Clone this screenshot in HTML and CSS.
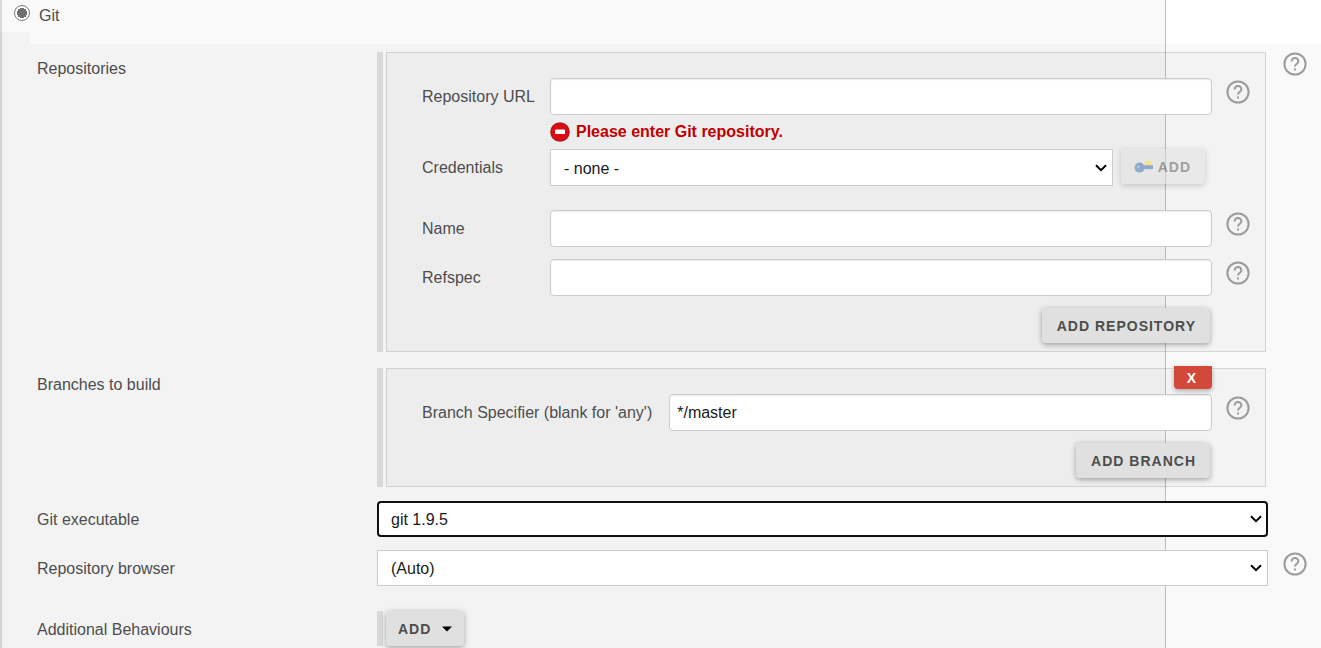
FILE: index.html
```html
<!DOCTYPE html>
<html lang="en">
<head>
<meta charset="utf-8">
<title>Source Code Management</title>
<link rel="stylesheet" href="styles.css">
</head>
<body>
<svg class="sprite" aria-hidden="true">
  <symbol id="help" viewBox="0 0 24 24">
    <circle cx="12" cy="12" r="10.6" fill="none" stroke="currentColor" stroke-width="2"/>
    <path d="M8.6 9.4a3.4 3.4 0 0 1 6.8 0c0 2.3-3.4 2.5-3.4 5.2" fill="none" stroke="currentColor" stroke-width="2"/>
    <path d="M11 16.4h2v2h-2z" fill="currentColor"/>
  </symbol>
</svg>
<form class="page">
  <div class="scm">
    <input class="radio" type="radio" name="scm" id="git" checked>
    <label for="git">Git</label>
  </div>
  <div class="section">
    <div class="gutter"></div>
    <div class="fields">
      <div class="row">
        <div class="row-label">Repositories</div>
        <div class="chunk">
          <div class="handle"></div>
          <div class="box">
            <div class="field">
              <label class="field-label" for="url">Repository URL</label>
              <input class="text" type="text" id="url">
              <a class="help" href="#" aria-label="Help for Repository URL"><svg><use href="#help"/></svg></a>
            </div>
            <div class="error">
              <svg class="error-icon" viewBox="0 0 20 20" aria-hidden="true">
                <circle cx="10" cy="10" r="9.8" fill="#b3141a"/>
                <circle cx="10" cy="10" r="8.6" fill="#dc0d12"/>
                <rect x="5" y="7.6" width="10" height="4.4" rx=".8" fill="#fff"/>
              </svg>
              Please enter Git repository.
            </div>
            <div class="field credentials">
              <label class="field-label" for="cred">Credentials</label>
              <select class="select" id="cred"><option>- none -</option></select>
              <button class="btn" type="button" disabled>
                <svg class="key" viewBox="0 0 20 14" aria-hidden="true">
                  <circle cx="14.5" cy="4.5" r="4" fill="#f2e53a"/>
                  <path d="M9 5.2h10v3.8h-2l-.8.8-1-.8H9z" fill="#3468ad"/>
                  <circle cx="5.6" cy="7.6" r="5" fill="#3468ad"/>
                  <circle cx="4.2" cy="7" r="1.4" fill="#6f9bd0"/>
                </svg>
                ADD
              </button>
            </div>
            <div class="field name">
              <label class="field-label" for="name">Name</label>
              <input class="text" type="text" id="name">
              <a class="help" href="#" aria-label="Help for Name"><svg><use href="#help"/></svg></a>
            </div>
            <div class="field refspec">
              <label class="field-label" for="refspec">Refspec</label>
              <input class="text" type="text" id="refspec">
              <a class="help" href="#" aria-label="Help for Refspec"><svg><use href="#help"/></svg></a>
            </div>
            <div class="actions"><button class="btn" type="button">ADD REPOSITORY</button></div>
          </div>
        </div>
        <a class="help" href="#" aria-label="Help for Repositories"><svg><use href="#help"/></svg></a>
      </div>

      <div class="row branches">
        <div class="row-label">Branches to build</div>
        <div class="chunk">
          <div class="handle"></div>
          <div class="box">
            <button class="remove" type="button" aria-label="Delete branch">X</button>
            <div class="field">
              <label class="field-label wide" for="branch">Branch Specifier (blank for 'any')</label>
              <input class="text" type="text" id="branch" value="*/master">
              <a class="help" href="#" aria-label="Help for Branch Specifier"><svg><use href="#help"/></svg></a>
            </div>
            <div class="actions"><button class="btn" type="button">ADD BRANCH</button></div>
          </div>
        </div>
      </div>

      <div class="row single">
        <label class="row-label" for="exe">Git executable</label>
        <select class="select focused" id="exe"><option>git 1.9.5</option></select>
      </div>

      <div class="row single browser">
        <label class="row-label" for="browser">Repository browser</label>
        <select class="select" id="browser"><option>(Auto)</option></select>
        <a class="help" href="#" aria-label="Help for Repository browser"><svg><use href="#help"/></svg></a>
      </div>

      <div class="row single behaviours">
        <div class="row-label">Additional Behaviours</div>
        <div class="chunk">
          <div class="handle"></div>
          <button class="btn" type="button">ADD
            <svg class="caret" viewBox="0 0 10 6" aria-hidden="true"><path d="M0 .5h10L5 5.5z"/></svg>
          </button>
        </div>
      </div>
    </div>
  </div>
</form>
</body>
</html>
```
FILE: styles.css
```css
* { box-sizing: border-box; }

body {
  margin: 0;
  font: 16px/20px "Liberation Sans", Arial, sans-serif;
  color: #4d4d4d;
}

.sprite { display: none; }

/* The configuration pane ends before the window edge; the form overflows it. */
.page {
  display: flex;
  flex-direction: column;
  min-height: 100vh;
  background: linear-gradient(to right,
    #d9d9d9 2px,
    #f9f9f9 2px calc(100% - 156px),
    #c0c0c0 calc(100% - 156px) calc(100% - 155px),
    #fff calc(100% - 155px));
}

.scm {
  display: flex;
  gap: 9px;
  height: 32px;
  padding: 5px 0 0 14px;
}

.scm label { padding-top: 1px; }

.radio {
  appearance: none;
  width: 16px;
  height: 16px;
  margin: 0;
  border: 1px solid #767676;
  border-radius: 50%;
  background: radial-gradient(circle, #6f6f6f 5px, #fff 5px);
}

.section {
  display: grid;
  grid-template-columns: 30px 1fr;
  flex: 1;
}

.gutter { background: rgba(0, 0, 0, .025); }

.fields {
  margin-top: 12px;
  padding: 8px 14px 0 7px;
  background: rgba(0, 0, 0, .025);
}

.row {
  display: grid;
  grid-template-columns: 340px 1fr 24px;
  align-items: start;
}

.row-label { padding-top: 7px; }
.branches { margin-top: 16px; }
.single { margin-top: 14px; }
.single .row-label { padding-top: 9px; }
.single .help { margin-top: 2px; }
.browser { margin-top: 13px; }
.behaviours { margin-top: 25px; }

.chunk {
  display: flex;
  gap: 3px;
  margin-right: 17px;
}

.handle {
  width: 6px;
  background: #d9d9d9;
}

.box {
  position: relative;
  flex: 1;
  padding: 25px 15px 8px 35px;
  border: 1px solid rgba(0, 0, 0, .12);
  background: rgba(0, 0, 0, .025);
}

.field {
  display: flex;
  align-items: flex-start;
}

.field-label {
  width: 128px;
  padding-top: 9px;
}

.wide {
  width: auto;
  margin-right: 17px;
}

.text, .select {
  flex: 1;
  min-width: 0;
  height: 37px;
  margin: 0;
  border: 1px solid #ccc;
  background: #fff;
  font: inherit;
  color: #1a1a1a;
}

.text {
  padding: 0 7px;
  border-radius: 4px;
  box-shadow: inset 0 1px 1px rgba(0, 0, 0, .08);
}

.select {
  appearance: none;
  padding: 2px 24px 0 13px;
  border-radius: 0;
  background: #fff url("data:image/svg+xml,%3Csvg xmlns='http://www.w3.org/2000/svg' width='12' height='8'%3E%3Cpath d='M1 1.2l5 5 5-5' fill='none' stroke='%23000' stroke-width='2'/%3E%3C/svg%3E") no-repeat right 5px center;
}

.row > .select {
  height: 36px;
  margin-right: 15px;
}

.row > .focused {
  padding: 2px 23px 0 12px;
  border: 2px solid #101010;
  border-radius: 4px;
  background-position: right 4px center;
}

.help {
  width: 24px;
  height: 24px;
  color: #9b9b9b;
}

.field .help { margin: 2px 0 0 14px; }

.help svg {
  display: block;
  width: 24px;
  height: 24px;
}

.error {
  display: flex;
  align-items: center;
  gap: 6px;
  height: 34px;
  padding-left: 128px;
  font-weight: bold;
  color: #c00000;
}

.error-icon {
  width: 20px;
  height: 20px;
}

.credentials { padding-right: 45px; }
.credentials .btn { margin-left: 8px; }

.name { margin-top: 24px; }
.refspec { margin-top: 12px; }

.btn {
  display: flex;
  align-items: center;
  gap: 4px;
  height: 35px;
  padding: 0 15px;
  border: 0;
  border-radius: 4px;
  background: #e0e0e0;
  box-shadow: 0 2px 5px rgba(0, 0, 0, .25), 0 0 6px rgba(0, 0, 0, .1);
  font: bold 14px/20px "Liberation Sans", Arial, sans-serif;
  letter-spacing: 1px;
  color: #4d4d4d;
}

.btn:disabled {
  padding: 0 14px 0 13px;
  opacity: .5;
}

.actions {
  display: flex;
  justify-content: flex-end;
  margin-top: 12px;
  padding-right: 40px;
}

.actions .btn { padding-right: 14px; }

.key {
  width: 20px;
  height: 14px;
}

.caret {
  width: 10px;
  height: 6px;
  margin-left: 7px;
  fill: #000;
}

.behaviours .btn { padding: 0 12px; }

/* Sits over the top border of its box. */
.remove {
  position: absolute;
  top: -3px;
  right: 53px;
  width: 38px;
  height: 23px;
  padding: 0 3px 0 0;
  border: 0;
  border-radius: 0 0 4px 4px;
  background: #d24939;
  box-shadow: 0 2px 5px rgba(0, 0, 0, .3);
  font: bold 14px/20px "Liberation Sans", Arial, sans-serif;
  color: #fff;
}
```
